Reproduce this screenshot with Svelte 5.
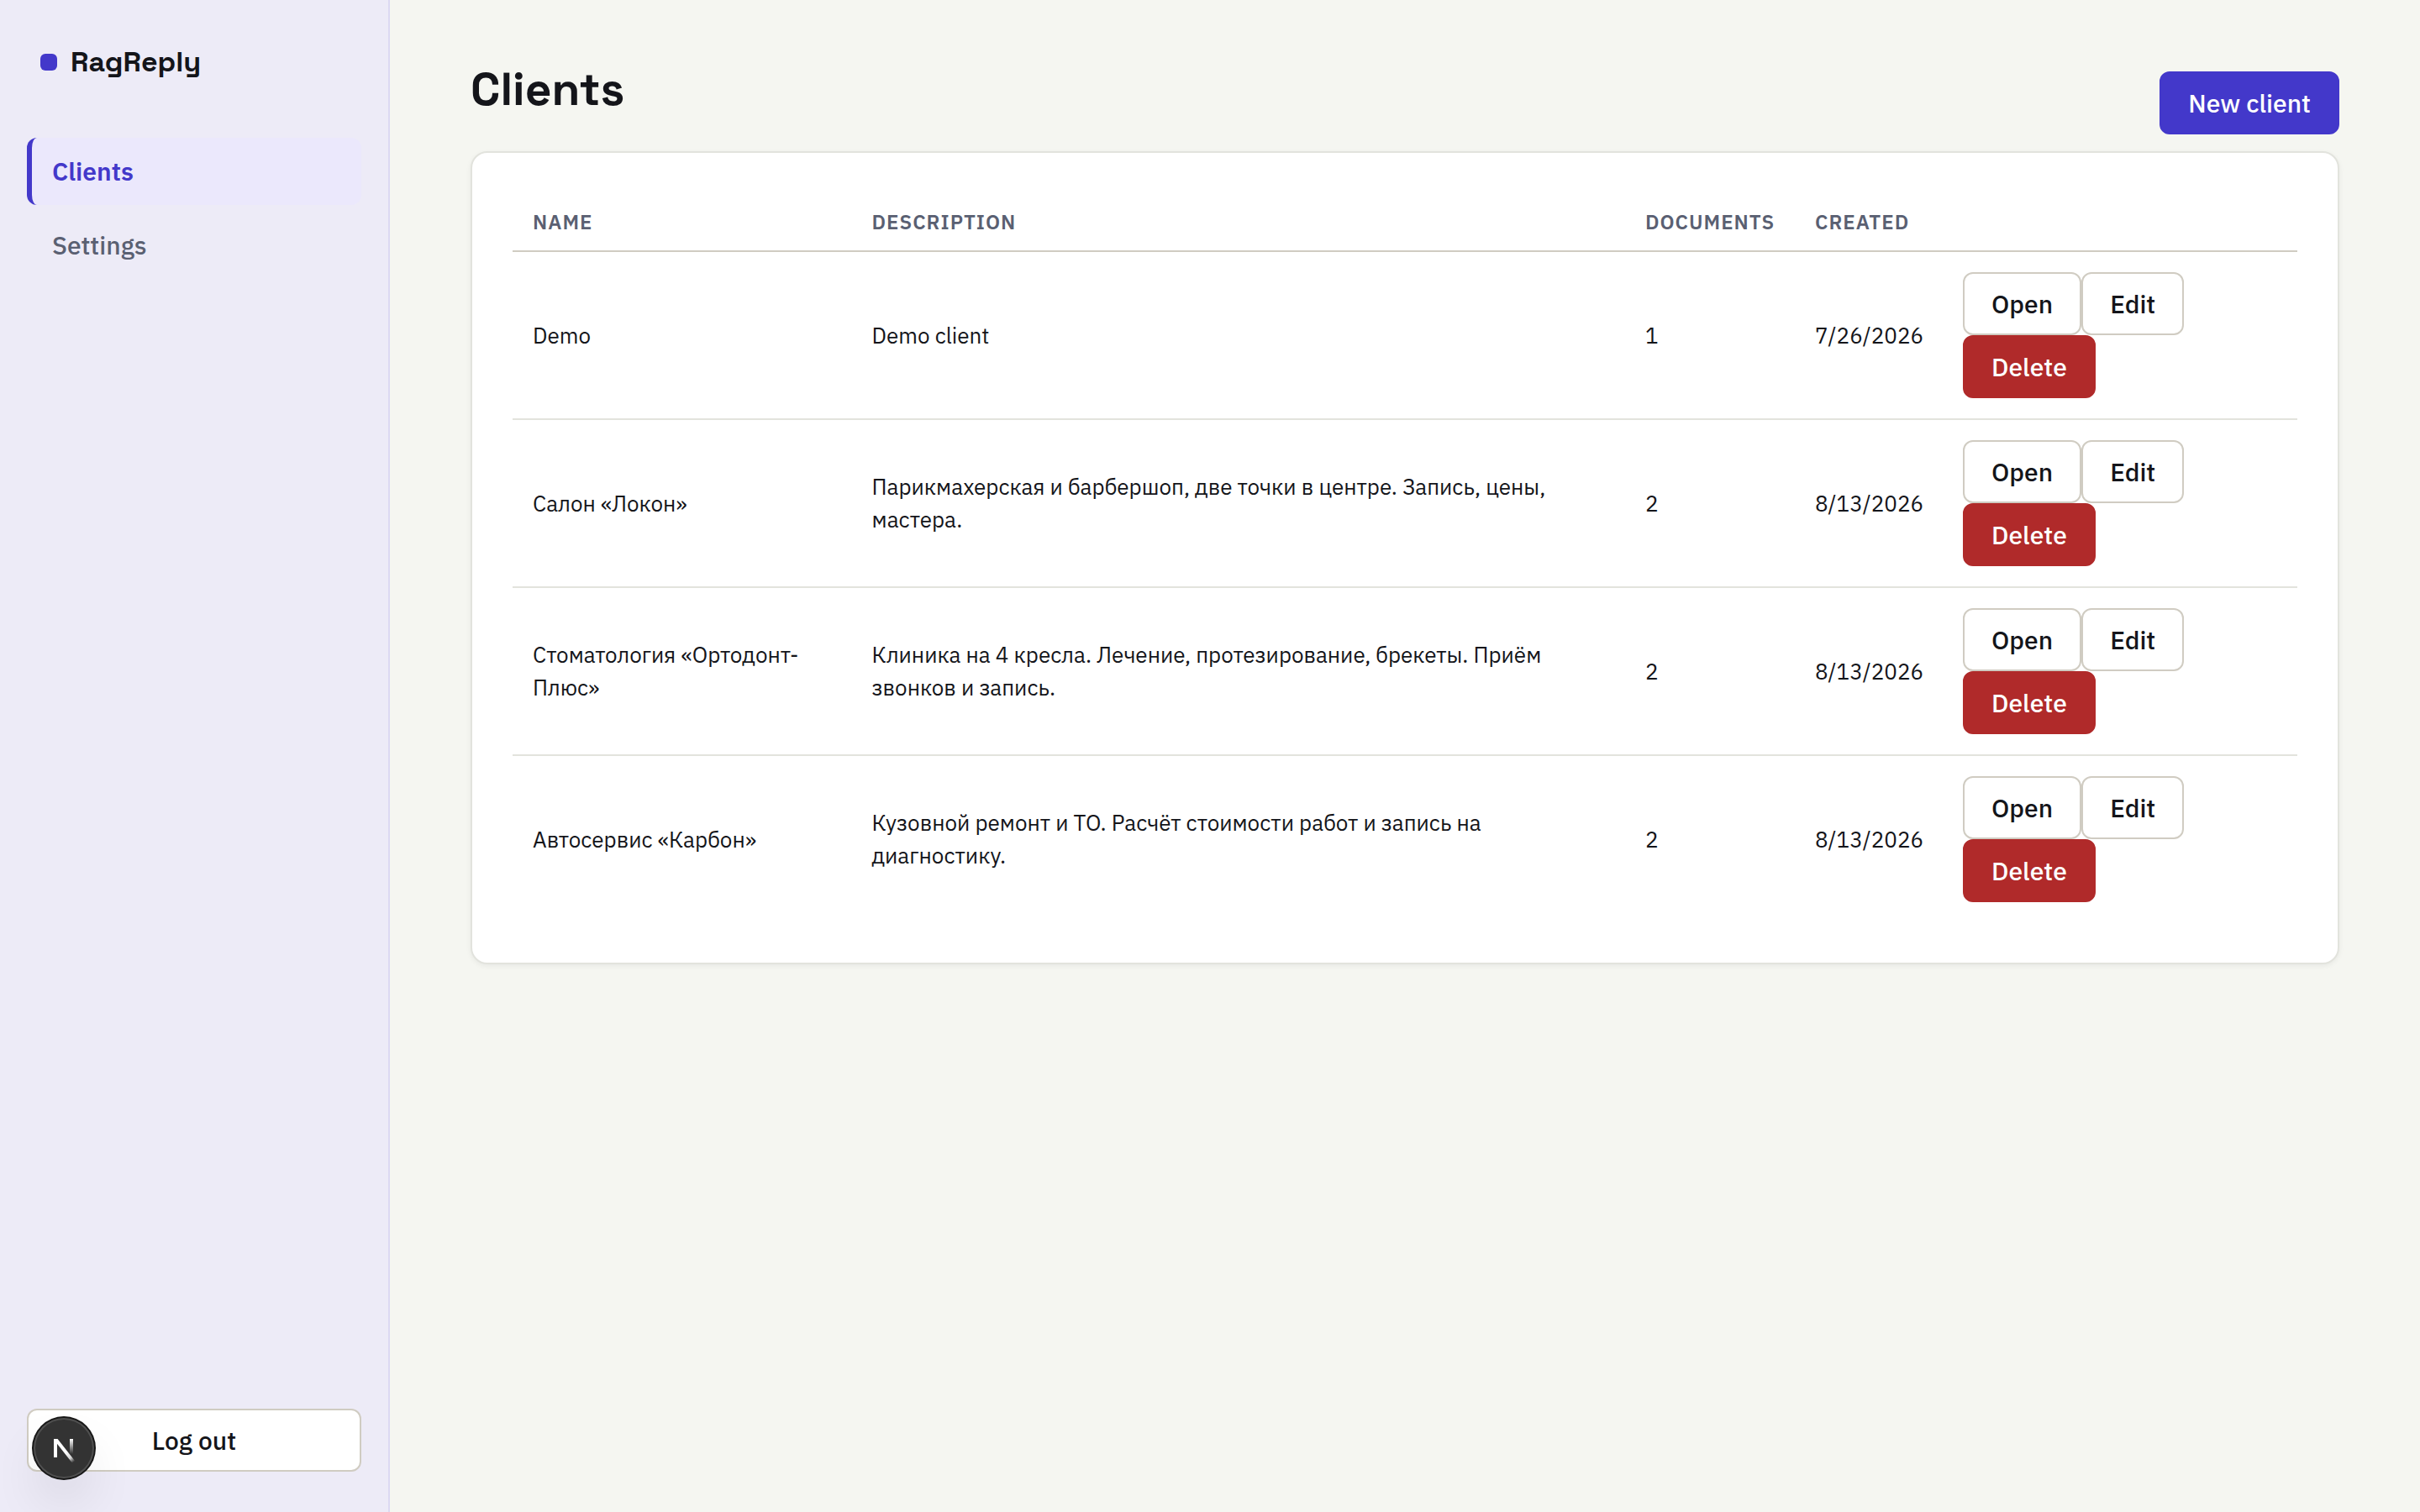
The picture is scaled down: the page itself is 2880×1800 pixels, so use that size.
<script>
  let navItems = [
    { label: 'Clients', href: '#clients', active: true },
    { label: 'Settings', href: '#settings', active: false },
  ];

  let clients = $state([
    { id: 1, name: 'Demo', description: 'Demo client', documents: 1, created: '7/26/2026' },
    {
      id: 2,
      name: 'Салон «Локон»',
      description: 'Парикмахерская и барбершоп, две точки в центре. Запись, цены, мастера.',
      documents: 2,
      created: '8/13/2026',
    },
    {
      id: 3,
      name: 'Стоматология «Ортодонт-Плюс»',
      description: 'Клиника на 4 кресла. Лечение, протезирование, брекеты. Приём звонков и запись.',
      documents: 2,
      created: '8/13/2026',
    },
    {
      id: 4,
      name: 'Автосервис «Карбон»',
      description: 'Кузовной ремонт и ТО. Расчёт стоимости работ и запись на диагностику.',
      documents: 2,
      created: '8/13/2026',
    },
  ]);

  function removeClient(id) {
    clients = clients.filter((c) => c.id !== id);
  }
</script>

<div class="shell">
  <aside class="sidebar">
    <div class="brand">
      <span class="brand-mark"></span>
      RagReply
    </div>

    <nav class="nav">
      {#each navItems as item}
        <a class="nav-link" class:active={item.active} href={item.href}>{item.label}</a>
      {/each}
    </nav>

    <button class="btn btn-secondary logout" type="button">Log out</button>
  </aside>

  <main class="main">
    <header class="page-header">
      <h1>Clients</h1>
      <button class="btn btn-primary" type="button">New client</button>
    </header>

    <section class="card">
      <table>
        <colgroup>
          <col class="col-name" />
          <col />
          <col class="col-documents" />
          <col class="col-created" />
          <col class="col-actions" />
        </colgroup>
        <thead>
          <tr>
            <th>Name</th>
            <th>Description</th>
            <th>Documents</th>
            <th>Created</th>
            <th></th>
          </tr>
        </thead>
        <tbody>
          {#each clients as client (client.id)}
            <tr>
              <td>{client.name}</td>
              <td>{client.description}</td>
              <td>{client.documents}</td>
              <td>{client.created}</td>
              <td>
                <div class="actions">
                  <button class="btn btn-secondary" type="button">Open</button>
                  <button class="btn btn-secondary" type="button">Edit</button>
                  <button class="btn btn-danger" type="button" onclick={() => removeClient(client.id)}>Delete</button>
                </div>
              </td>
            </tr>
          {/each}
        </tbody>
      </table>
    </section>
  </main>
</div>

<!-- Dev tools badge -->
<button class="dev-badge" type="button" aria-label="Open dev tools">
  <svg viewBox="0 0 72 72" fill="none" aria-hidden="true">
    <defs>
      <linearGradient id="diagonal-fade" x1="38" y1="41" x2="47" y2="53" gradientUnits="userSpaceOnUse">
        <stop stop-color="#fff" />
        <stop offset="0.6" stop-color="#fff" stop-opacity="0.8" />
        <stop offset="1" stop-color="#fff" stop-opacity="0" />
      </linearGradient>
      <linearGradient id="stem-fade" x1="45" y1="25" x2="45" y2="43" gradientUnits="userSpaceOnUse">
        <stop stop-color="#fff" />
        <stop offset="1" stop-color="#fff" stop-opacity="0" />
      </linearGradient>
      <clipPath id="mark-clip">
        <rect x="20" y="25" width="36" height="30" />
      </clipPath>
    </defs>
    <g clip-path="url(#mark-clip)" stroke-width="4">
      <path d="M48 53L26 25V47" stroke="url(#diagonal-fade)" />
      <path d="M45 25V43" stroke="url(#stem-fade)" />
    </g>
  </svg>
</button>

<style>
  :global(body) {
    margin: 0;
    background: #f5f6f1;
  }

  .shell {
    display: grid;
    grid-template-columns: 464px 1fr;
    min-height: 100vh;
    font-family: 'IBM Plex Sans', Roboto, sans-serif;
    font-size: 30px;
    color: #14151a;
  }

  .sidebar {
    position: sticky;
    top: 0;
    box-sizing: border-box;
    height: 100vh;
    display: flex;
    flex-direction: column;
    padding: 48px 32px;
    background: #edebf7;
    border-right: 2px solid #dcd9f2;
  }

  .brand {
    display: flex;
    align-items: center;
    gap: 16px;
    padding: 0 16px;
    margin-bottom: 64px;
    font-family: 'Space Grotesk', Inter, sans-serif;
    font-size: 34px;
    font-weight: 700;
    line-height: 52px;
  }

  .brand-mark {
    width: 20px;
    height: 20px;
    border-radius: 6px;
    background: #4338ca;
  }

  .nav {
    display: flex;
    flex-direction: column;
    gap: 8px;
  }

  .nav-link {
    padding: 16px 24px;
    border-left: 6px solid transparent;
    border-radius: 12px;
    font-weight: 500;
    line-height: 48px;
    color: #5a6072;
    text-decoration: none;
  }

  .nav-link.active {
    background: #ebe8fc;
    border-left-color: #4338ca;
    color: #4338ca;
    font-weight: 600;
  }

  .logout {
    margin-top: auto;
  }

  .main {
    min-width: 0;
    padding: 72px 96px;
  }

  .page-header {
    display: flex;
    align-items: flex-end;
    justify-content: space-between;
    margin-bottom: 20px;
  }

  h1 {
    margin: 0 0 20px;
    font-family: 'Space Grotesk', Inter, sans-serif;
    font-size: 55px;
    font-weight: 600;
    line-height: 68px;
  }

  .btn {
    padding: 16px 32px;
    border: 2px solid transparent;
    border-radius: 12px;
    font-family: inherit;
    font-size: 30px;
    font-weight: 500;
    line-height: 39px;
    cursor: pointer;
  }

  .btn-primary {
    background: #4338ca;
    border-color: #4338ca;
    color: #fff;
  }

  .btn-secondary {
    background: #fff;
    border-color: #d0ccc2;
    color: #14151a;
  }

  .btn-danger {
    background: #b02a2a;
    border-color: #b02a2a;
    color: #fff;
  }

  .card {
    padding: 48px;
    background: #fff;
    border: 2px solid #e2e3dd;
    border-radius: 20px;
    box-shadow: 0 2px 6px rgba(20, 21, 26, 0.06);
  }

  table {
    width: 100%;
    table-layout: fixed;
    border-collapse: separate;
    border-spacing: 0;
  }

  .col-name {
    width: 19%;
  }

  .col-documents {
    width: 202px;
  }

  .col-created {
    width: 176px;
  }

  .col-actions {
    width: 422px;
  }

  th {
    padding: 16px 24px;
    border-bottom: 2px solid #d0ccc2;
    font-size: 24px;
    font-weight: 600;
    line-height: 36px;
    letter-spacing: 1px;
    text-align: left;
    text-transform: uppercase;
    color: #5a6072;
  }

  td {
    padding: 24px;
    border-bottom: 2px solid #e2e3dd;
    font-size: 26px;
    line-height: 39px;
    vertical-align: middle;
  }

  tbody tr:last-child td {
    border-bottom: none;
  }

  .actions {
    display: flex;
    flex-wrap: wrap;
  }

  .dev-badge {
    position: fixed;
    left: 40px;
    bottom: 40px;
    width: 72px;
    height: 72px;
    padding: 0;
    border: none;
    border-radius: 50%;
    background: #333;
    box-shadow:
      0 0 0 2px #171717,
      inset 0 0 0 2px rgba(255, 255, 255, 0.14),
      0 32px 64px -16px rgba(0, 0, 0, 0.24);
    cursor: pointer;
  }

  .dev-badge svg {
    display: block;
    width: 100%;
    height: 100%;
  }
</style>
